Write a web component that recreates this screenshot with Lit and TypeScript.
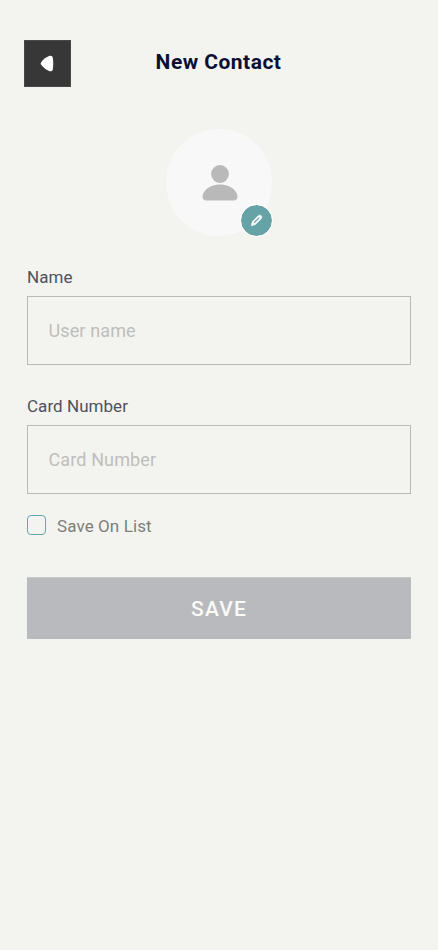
import { LitElement, html, css } from "lit";
import { customElement, property } from "lit/decorators.js";

@customElement("text-field")
class TextField extends LitElement {
  @property() label = "";
  @property() placeholder = "";
  static styles = css`
    :host { display: block; }
    .label { display: block; height: 24px; line-height: 24px; margin-bottom: 7px; font-size: 17px; letter-spacing: 0.05px; color: #4f5060; }
    .input { display: block; box-sizing: border-box; width: 100%; height: 69px; margin: 0; padding: 0 20px 1px 20.5px; border: 1px solid #b9b9b9; border-radius: 0; outline: none; background: transparent; font: inherit; font-size: 18px; letter-spacing: 0.12px; color: #4f5060; }
    .input::placeholder { color: #bebebd; opacity: 1; }
  `;
  render() {
    return html`<label class="label" for="field">${this.label}</label>
      <input id="field" class="input" placeholder=${this.placeholder} />`;
  }
}

@customElement("app-root")
class AppRoot extends LitElement {
  static styles = css`
    :host { display: block; box-sizing: border-box; min-height: 950px; background: #f3f4ef; font-family: Roboto, "Open Sans", sans-serif; }
    .header { display: grid; grid-template-columns: 47px 1fr 47px; padding: 40px 24px 0; height: 47px; }
    .back { display: grid; place-items: center; width: 47px; height: 47px; padding: 0; border: 0; background: #373737; box-shadow: inset 0 0 0 1px #484847; }
    .back svg { margin-right: 1px; }
    .title { margin: 0 1px 0 0; text-align: center; font-size: 21px; line-height: 45px; font-weight: 700; letter-spacing: 0.48px; color: #0b1033; white-space: nowrap; }
    .avatar { position: relative; display: grid; place-items: center; width: 106.5px; height: 107px; margin: 42px auto 0; border-radius: 50%; background: #f8f8f8; }
    .person { margin: 1px 0 0 1px; }
    .edit { position: absolute; right: -0.5px; bottom: -0.5px; box-sizing: border-box; display: grid; place-items: center; width: 33px; height: 33px; padding: 0; border: 1px solid #fff; border-radius: 50%; background: #65a3a7; background-clip: padding-box; }
    .form { padding: 29px 27px 0; }
    .second { margin-top: 29px; }
    .option { display: flex; align-items: center; gap: 11px; height: 24px; margin-top: 19px; font-size: 17px; letter-spacing: 0.1px; color: #7e7e7c; }
    .option span { padding-top: 2px; }
    .box { appearance: none; box-sizing: border-box; width: 19px; height: 20px; margin: 0; border: 1px solid #65a8ac; border-radius: 4px; }
    .save { display: block; width: 100%; height: 62px; margin-top: 40px; padding: 1px 0 0; border: 0; background: #b9babe; box-shadow: inset 0 1px #c7c8ca; color: #fafaf7; font: inherit; font-size: 21px; font-weight: 500; letter-spacing: 1.2px; }
    svg { display: block; }
  `;
  render() {
    return html`
      <header class="header">
        <button class="back" aria-label="Back">
          <svg width="14" height="17" viewBox="0 0 14 17"><path d="M1.2 7.2C3 4.7 5.8 2.4 9 1.1C11 .3 12.4.8 12.8 2.8C13.4 6.3 13.4 10.7 12.8 14.2C12.4 16.2 11 16.7 9 15.9C5.8 14.6 3 12.3 1.2 9.8C.5 8.8.5 8.2 1.2 7.2Z" fill="#fff"/></svg>
        </button>
        <h1 class="title">New Contact</h1>
      </header>
      <div class="avatar">
        <svg class="person" width="36" height="36" viewBox="0 0 36 36" fill="#b9b9b9"><circle cx="18" cy="9" r="8.9"/><path d="M.5 32C.5 25.5 8.3 19.5 18 19.5S35.5 25.5 35.5 32C35.5 34.3 34 35.5 31.5 35.5H4.5C2 35.5.5 34.3.5 32Z"/></svg>
        <button class="edit" aria-label="Edit photo">
          <svg width="13" height="13" viewBox="0 0 13 13"><path d="M1.3 11.8L2.3 7.6L7.9 2C9.1.9 10.3.9 11.2 1.7C12.1 2.6 12 3.9 10.9 5L5.3 10.6Z" fill="#fff" stroke="#fff" stroke-width=".6" stroke-linejoin="round"/><path d="M4.3 8.6L8.9 4" stroke="#65a3a7" stroke-width="1.2" stroke-linecap="round"/></svg>
        </button>
      </div>
      <main class="form">
        <text-field label="Name" placeholder="User name"></text-field>
        <text-field class="second" label="Card Number" placeholder="Card Number"></text-field>
        <label class="option"><input class="box" type="checkbox" /><span>Save On List</span></label>
        <button class="save">SAVE</button>
      </main>`;
  }
}
